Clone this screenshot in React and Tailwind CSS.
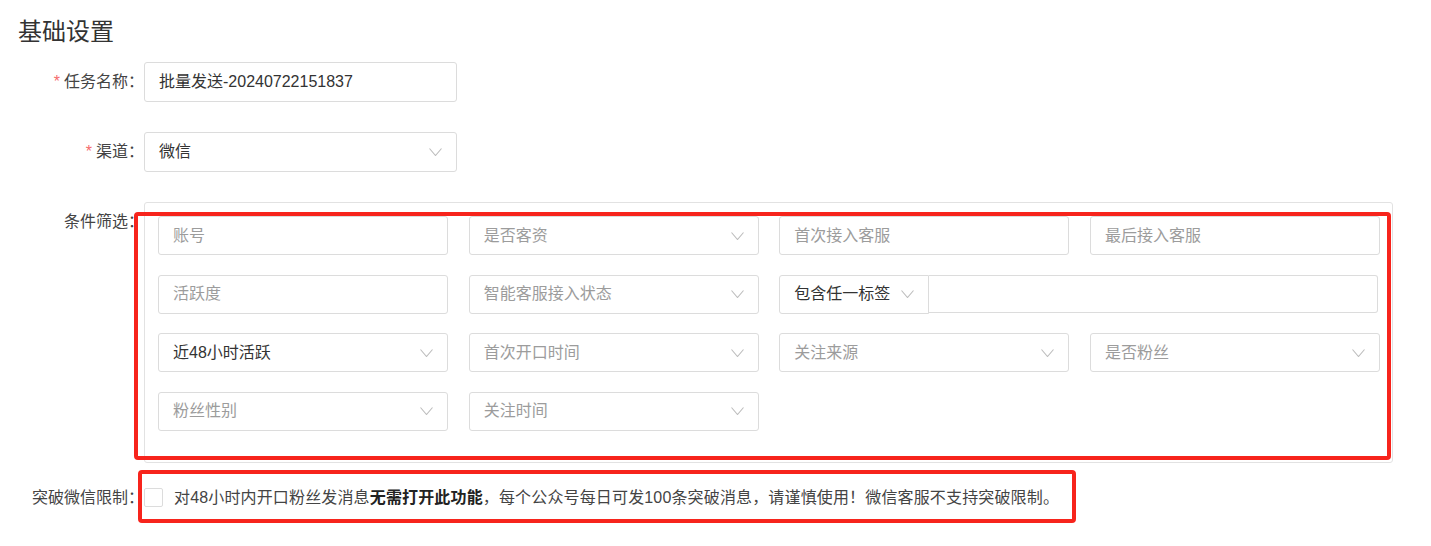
/** Basic settings form for a bulk-send task
 * Task name, channel, condition filter grid and the "break WeChat limit" option.
 */

import React from "react";

// Thin down-chevron used by every select box
const Chevron = () => (
    <svg width="13" height="8" viewBox="0 0 13 8" fill="none" className="shrink-0">
        <polyline points="0.5,0.5 6.5,7.5 12.5,0.5" stroke="#bdbdbd" strokeWidth="1.1" />
    </svg>
);

// One filter box: an input or a select, with placeholder or value text
const Field = ({ text, select = false, value = false, className = "" }) => (
    <div className={`h-[39px] flex items-center justify-between border border-[#dcdcdc] rounded-[3px] pl-[14px] pr-[14px] bg-white ${className}`}>
        <span className={value ? "text-[#333]" : "text-[#9c9c9c]"}>{text}</span>
        {select && <Chevron />}
    </div>
);

const FormLabel = ({ children, required = false }) => (
    <div className="w-[144px] shrink-0 text-right leading-[40px] text-[#444]">
        {required && <span className="text-[#f56c6c] mr-[4px]">*</span>}
        {children}
    </div>
);

const App = () => {
    // Filter grid rows (row 2 has a combined tag select + input spanning two columns)
    const rowOne = [
        { text: "账号" },
        { text: "是否客资", select: true },
        { text: "首次接入客服" },
        { text: "最后接入客服" },
    ];
    const rowThree = [
        { text: "近48小时活跃", select: true, value: true },
        { text: "首次开口时间", select: true },
        { text: "关注来源", select: true },
        { text: "是否粉丝", select: true },
    ];

    return (
        <div className="w-[1431px] h-[546px] bg-white text-[16px] font-['Liberation_Sans','Noto_Sans_CJK_SC',sans-serif] overflow-hidden">
            {/* Header */}
            <h2 className="pt-[16px] pl-[18px] text-[24px] leading-[32px] text-[#333] font-normal">基础设置</h2>

            <div className="mt-[14px] pr-[38px] flex flex-col">
                {/* Task name */}
                <div className="flex">
                    <FormLabel required>任务名称：</FormLabel>
                    <div className="w-[313px] h-[40px] flex items-center border border-[#dcdcdc] rounded-[3px] px-[14px] text-[#333]">
                        批量发送-20240722151837
                    </div>
                </div>

                {/* Channel */}
                <div className="flex mt-[30px]">
                    <FormLabel required>渠道：</FormLabel>
                    <div className="w-[313px] h-[40px] flex items-center justify-between border border-[#dcdcdc] rounded-[3px] pl-[14px] pr-[14px] text-[#333]">
                        <span>微信</span>
                        <Chevron />
                    </div>
                </div>

                {/* Condition filter panel */}
                <div className="flex mt-[30px]">
                    <FormLabel>条件筛选：</FormLabel>
                    <div className="relative flex-1 border border-[#e2e2e2] rounded-[3px] pl-[13px] pr-[12px] pt-[13px] pb-[31px]">
                        <div className="grid grid-cols-4 gap-x-[20.67px] gap-y-[19.5px]">
                            {rowOne.map((f) => (
                                <Field key={f.text} {...f} />
                            ))}

                            <Field text="活跃度" />
                            <Field text="智能客服接入状态" select />
                            <div className="col-span-2 flex h-[39px]">
                                <Field text="包含任一标签" select value className="w-[150px] rounded-r-none" />
                                <div className="flex-1 mr-[2px] h-[38px] border border-l-0 border-[#dcdcdc] rounded-r-[3px]"></div>
                            </div>

                            {rowThree.map((f) => (
                                <Field key={f.text} {...f} />
                            ))}

                            <Field text="粉丝性别" select />
                            <Field text="关注时间" select />
                        </div>

                        {/* Annotation outline */}
                        <div className="absolute left-[-11px] right-[1px] top-[9px] bottom-[2px] border-[4px] border-[#f7241c] rounded-[4px] pointer-events-none"></div>
                    </div>
                </div>

                {/* Break WeChat limit */}
                <div className="flex mt-[15px]">
                    <FormLabel>突破微信限制：</FormLabel>
                    <div className="relative flex items-center gap-[11px] h-[40px] text-[#444]">
                        <span className="w-[19px] h-[19px] border border-[#dcdcdc] rounded-[2px] bg-white"></span>
                        <span className="tracking-[0.15px]">
                            对48小时内开口粉丝发消息<b className="font-bold text-[#222]">无需打开此功能</b>，每个公众号每日可发100条突破消息，请谨慎使用！微信客服不支持突破限制。
                        </span>

                        {/* Annotation outline */}
                        <div className="absolute left-[-6px] w-[938px] top-[-8px] bottom-[-5px] border-[4px] border-[#f7241c] rounded-[4px] pointer-events-none"></div>
                    </div>
                </div>
            </div>
        </div>
    );
};

export default App;
